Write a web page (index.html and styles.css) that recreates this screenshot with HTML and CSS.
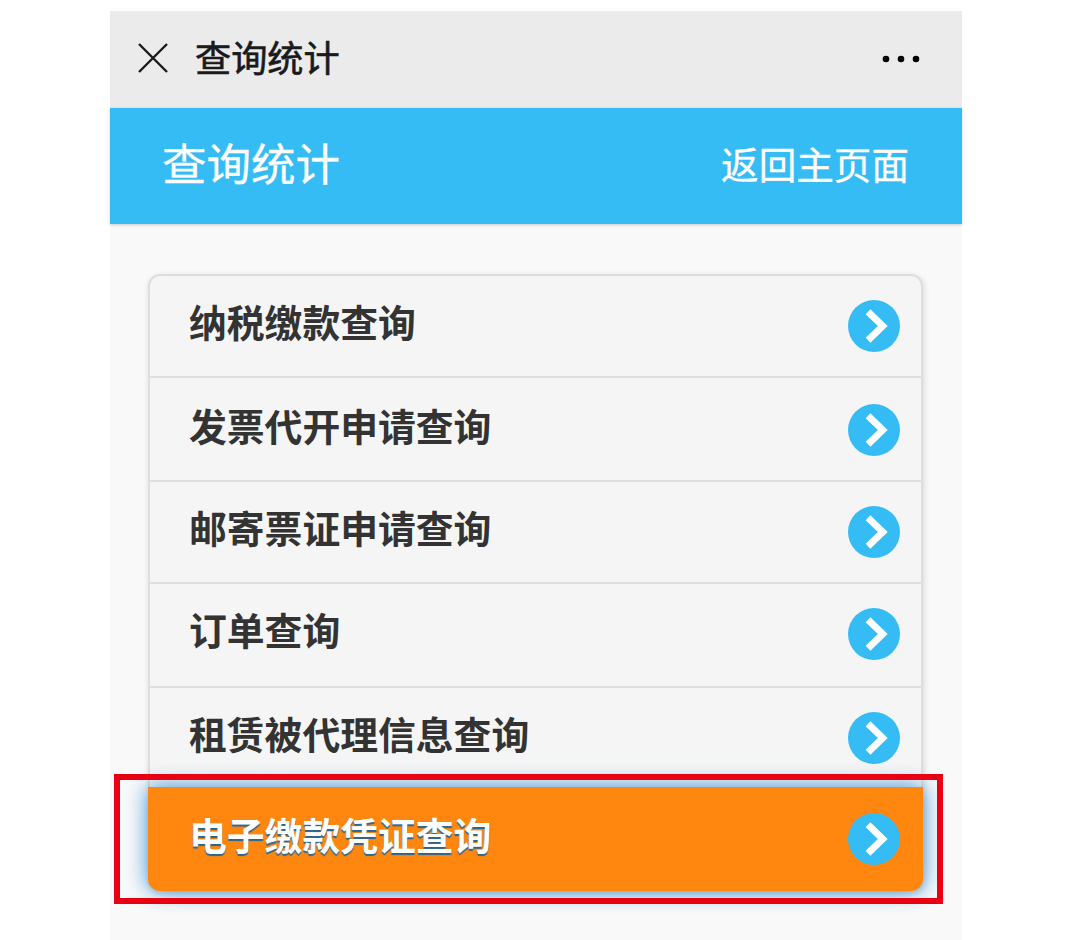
FILE: index.html
```html
<!DOCTYPE html>
<html lang="zh-CN">
<head>
<meta charset="utf-8">
<title>查询统计</title>
<link rel="stylesheet" href="styles.css">
</head>
<body>
<svg class="defs" width="0" height="0" aria-hidden="true">
  <symbol id="go" viewBox="0 0 52 52">
    <circle cx="26" cy="26" r="26" fill="#35bcf4"/>
    <path d="M20 11.8L34.8 26L20 40.2" fill="none" stroke="#fff" stroke-width="6.8"/>
  </symbol>
</svg>
<main class="phone">
  <div class="topbar">
    <svg class="close" viewBox="0 0 30 30"><path d="M1 1L29 29M29 1L1 29"/></svg>
    <span class="topbar-title">查询统计</span>
    <svg class="more" viewBox="0 0 38 8"><circle cx="4" cy="4" r="3.3"/><circle cx="19" cy="4" r="3.3"/><circle cx="34" cy="4" r="3.3"/></svg>
  </div>
  <header class="header">
    <h1 class="header-title">查询统计</h1>
    <a class="home">返回主页面</a>
  </header>
  <ul class="list">
    <li class="item"><span class="label">纳税缴款查询</span><svg class="go"><use href="#go"/></svg></li>
    <li class="item second"><span class="label">发票代开申请查询</span><svg class="go"><use href="#go"/></svg></li>
    <li class="item"><span class="label">邮寄票证申请查询</span><svg class="go"><use href="#go"/></svg></li>
    <li class="item fourth"><span class="label">订单查询</span><svg class="go"><use href="#go"/></svg></li>
    <li class="item last"><span class="label">租赁被代理信息查询</span><svg class="go"><use href="#go"/></svg></li>
    <li class="item active"><span class="label">电子缴款凭证查询</span><svg class="go"><use href="#go"/></svg><span class="marker"></span></li>
  </ul>
</main>
</body>
</html>
```
FILE: styles.css
```css
* { box-sizing: border-box; }
body {
  margin: 0;
  height: 940px;
  padding: 11px 118px 0 110px;
  overflow: hidden;
  background: #fff;
  font-family: "Noto Sans CJK SC", sans-serif;
}
.defs { position: absolute; }
.phone { height: 929px; background: #f9f9f9; }
.topbar {
  height: 97px;
  padding: 0 42px 0 28px;
  display: flex;
  align-items: center;
  background: #ebebeb;
}
.close { width: 30px; height: 30px; margin-top: -4px; fill: none; stroke: #1a1a1a; stroke-width: 2.4; }
.topbar-title { margin: -8px 0 0 27px; font-size: 36.2px; line-height: 52px; color: #1a1a1a; -webkit-text-stroke: 0.6px #1a1a1a; }
.more { width: 38px; height: 8px; margin-left: auto; margin-top: -1px; fill: #000; }
.header {
  height: 116px;
  padding: 0 53px 8px 52px;
  display: flex;
  align-items: center;
  justify-content: space-between;
  background: #35bcf4;
  color: #fff;
  -webkit-text-stroke: 0.3px #fff;
  box-shadow: 0 1px 3px rgba(0, 0, 0, .2);
}
.header-title { margin: 0; font-size: 44.5px; line-height: 64px; font-weight: 400; }
.home { margin-top: 2px; font-size: 37.6px; line-height: 54px; }
.list {
  list-style: none;
  margin: 50px 39px 0 38px;
  padding: 0;
  border: 2px solid #dedede;
  border-bottom: 0;
  border-radius: 12px;
  background: #f5f5f5;
  box-shadow: 1px 2px 6px rgba(0, 0, 0, .14);
}
.item {
  height: 102px;
  padding: 0 21px 0 39px;
  display: flex;
  align-items: center;
  justify-content: space-between;
  border-bottom: 2px solid #dedede;
  color: #333;
}
.item.second { height: 104px; padding-top: 2px; }
.item.fourth { height: 104px; padding-bottom: 3px; }
.item.last { height: 99px; border-bottom: 0; }
.label { margin-top: -10px; font-size: 37.8px; line-height: 54px; font-weight: 700; }
.go { width: 52px; height: 52px; }
.item.active {
  position: relative;
  height: 104px;
  margin: 0 -2px;
  padding: 0 23px 0 41px;
  border: 0;
  border-radius: 0 0 12px 12px;
  background: #ff870f;
  color: #fff;
  text-shadow: 0 2px 1px #27678f;
  box-shadow: 0 0 22px #3a8fd6;
}
.marker {
  position: absolute;
  left: -34px;
  right: -20px;
  top: -13px;
  bottom: -13px;
  border: 6px solid #e60012;
}
```
